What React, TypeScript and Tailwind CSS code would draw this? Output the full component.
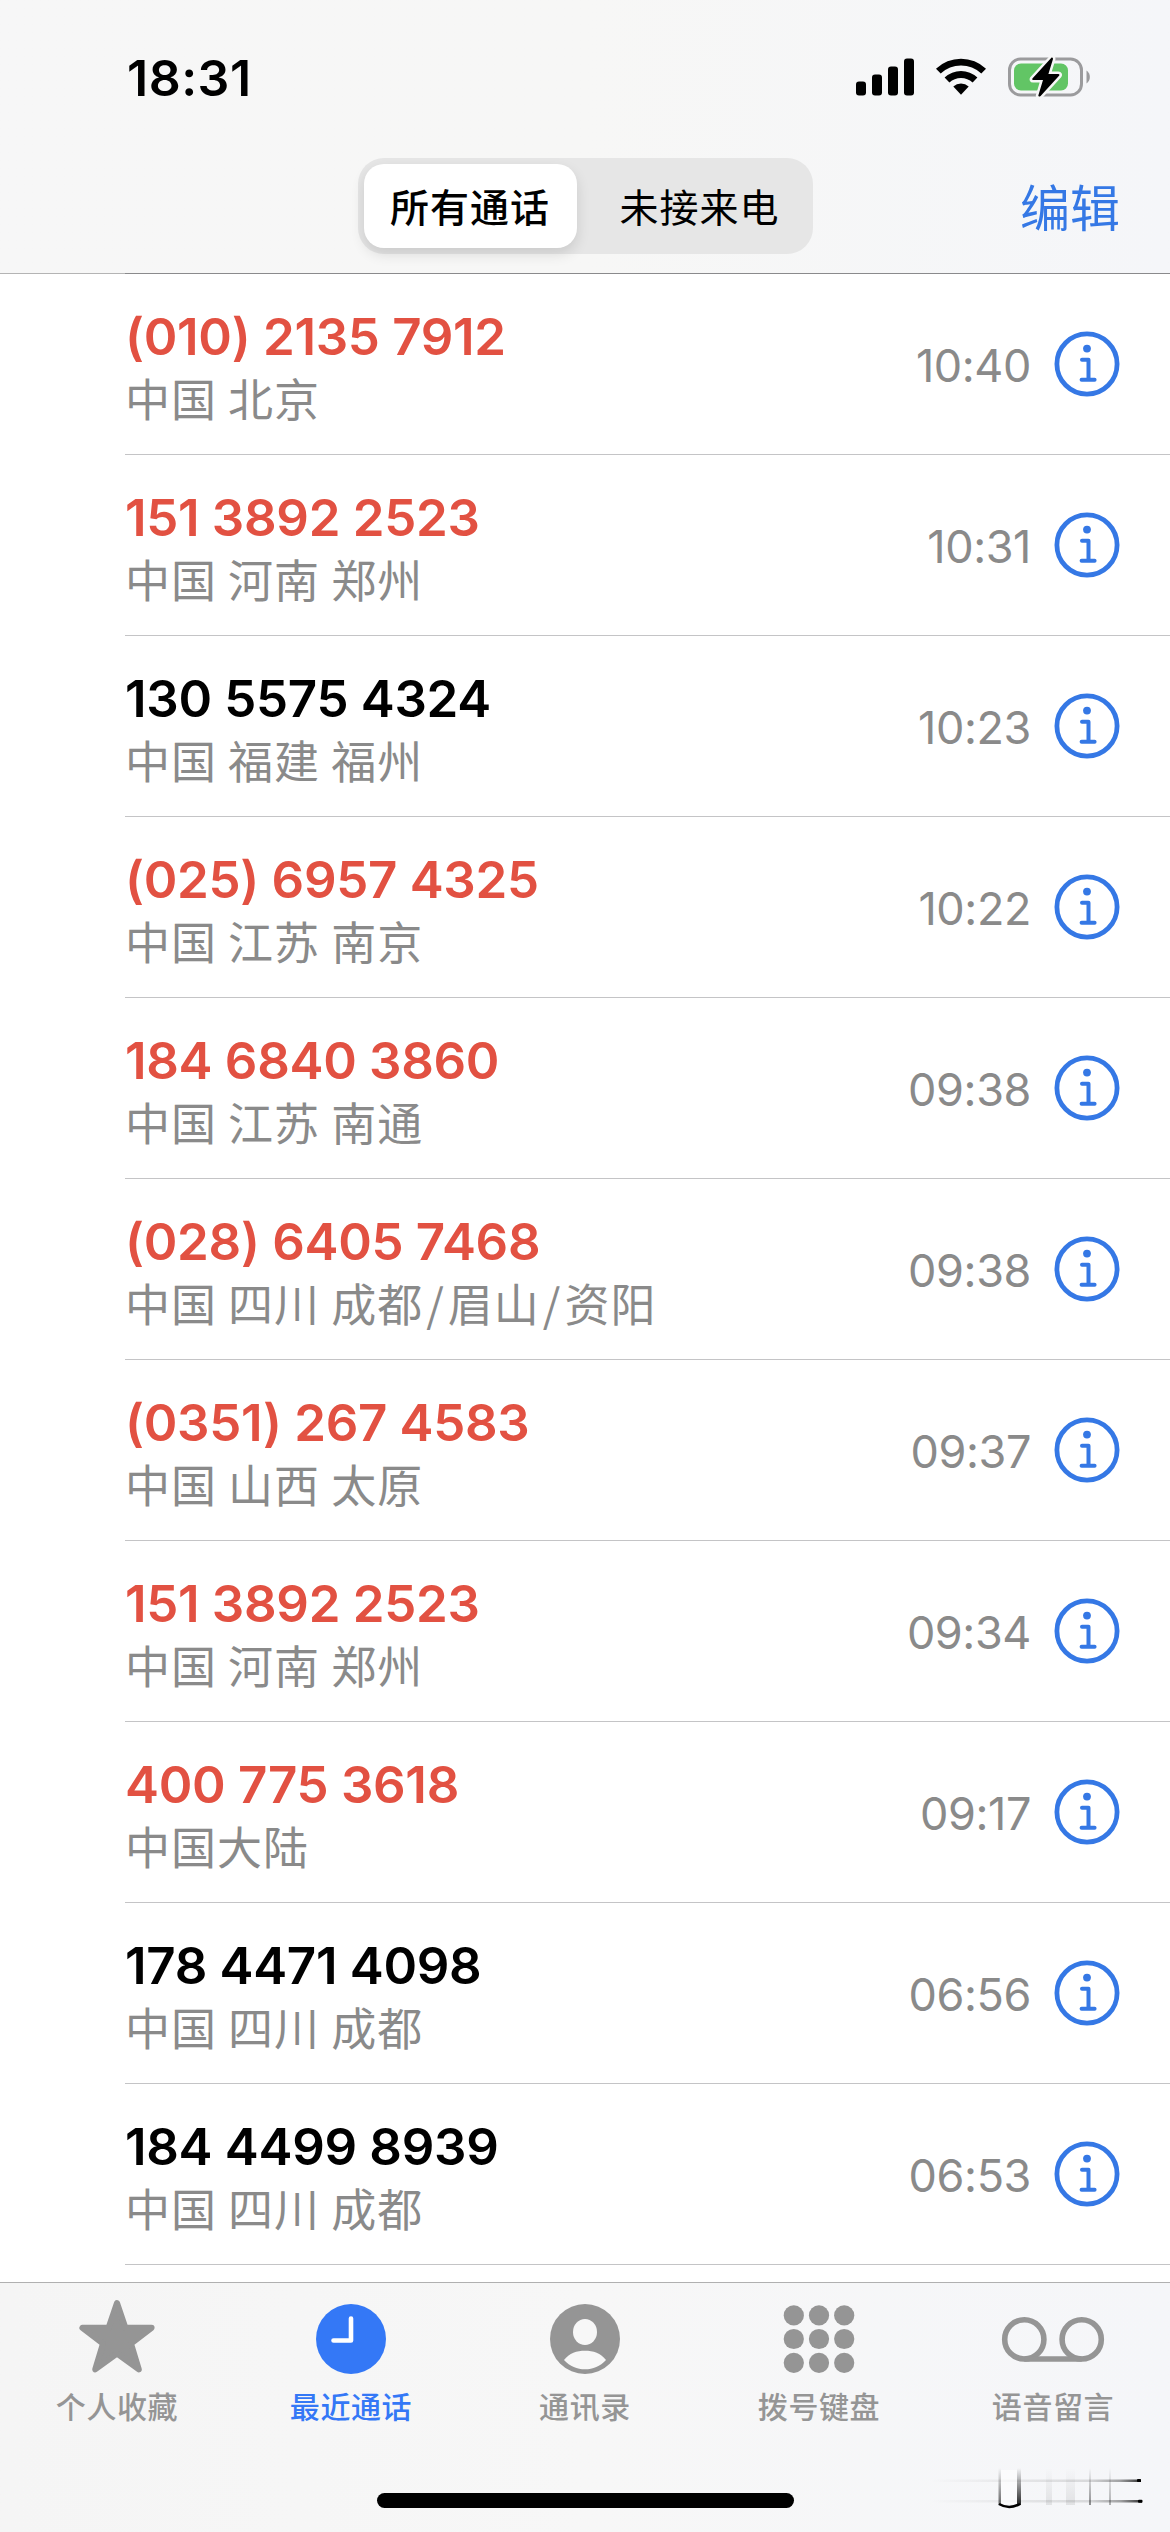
import clsx from "clsx";

interface Call {
  number: string;
  place: string;
  time: string;
  missed: boolean;
}

const calls: Call[] = [
  { number: "(010) 2135 7912", place: "中国 北京", time: "10:40", missed: true },
  { number: "151 3892 2523", place: "中国 河南 郑州", time: "10:31", missed: true },
  { number: "130 5575 4324", place: "中国 福建 福州", time: "10:23", missed: false },
  { number: "(025) 6957 4325", place: "中国 江苏 南京", time: "10:22", missed: true },
  { number: "184 6840 3860", place: "中国 江苏 南通", time: "09:38", missed: true },
  { number: "(028) 6405 7468", place: "中国 四川 成都/眉山/资阳", time: "09:38", missed: true },
  { number: "(0351) 267 4583", place: "中国 山西 太原", time: "09:37", missed: true },
  { number: "151 3892 2523", place: "中国 河南 郑州", time: "09:34", missed: true },
  { number: "400 775 3618", place: "中国大陆", time: "09:17", missed: true },
  { number: "178 4471 4098", place: "中国 四川 成都", time: "06:56", missed: false },
  { number: "184 4499 8939", place: "中国 四川 成都", time: "06:53", missed: false },
];

const StatusBar = () => (
  <div className="flex h-[158px] items-start justify-between pl-[127px] pr-[77px]">
    <span className="mt-[48px] text-[50px] leading-[60px] font-semibold tracking-[0.5px]">
      18:31
    </span>
    <div className="mt-[56px] flex items-start">
      {/* Signal */}
      <svg width="60" height="42" viewBox="0 0 60 42">
        <rect x="1" y="25.5" width="10" height="14" rx="3" />
        <rect x="17" y="18.5" width="10" height="21" rx="3" />
        <rect x="33" y="10.5" width="10" height="29" rx="3" />
        <rect x="49" y="2.5" width="10" height="37" rx="3" />
      </svg>
      {/* Wifi */}
      <svg className="ml-[20px]" width="52" height="42" viewBox="0 0 52 42">
        <path d="M1 12.8A36 36 0 0 1 51 12.8L46.3 17.6A29.3 29.3 0 0 0 5.7 17.6Z" />
        <path d="M9.6 21.6A24 24 0 0 1 42.4 21.6L37.6 26.4A17.2 17.2 0 0 0 14.4 26.4Z" />
        <path d="M18.3 30.4A11.4 11.4 0 0 1 33.7 30.4L26 38.8Z" />
      </svg>
      {/* Battery */}
      <svg className="ml-[20px]" width="86" height="42" viewBox="0 0 86 42">
        <rect x="2.5" y="3" width="72" height="36" rx="11" fill="none" stroke="#9b9b9d" strokeWidth="3" />
        <path d="M79.5 14.5A8 8 0 0 1 79.5 27.5Z" fill="#9b9b9d" />
        <rect x="7" y="7.5" width="54" height="27" rx="7" fill="#62c565" />
        <path
          d="M44.6 1.6L25.4 22.6Q24.6 24 26 24H36L31.3 39.6Q31.6 41.4 33.6 40L52.3 19.6Q53 18 51.4 18H41.4L46 3Q46 1 44.6 1.6Z"
          stroke="#f7f7f7"
          strokeWidth="5"
          strokeLinejoin="round"
          paintOrder="stroke"
        />
      </svg>
    </div>
  </div>
);

const Header = () => (
  <header className="flex h-[274px] flex-col bg-gradient-to-r from-[#f7f7f7] via-[#f7f7f6] to-[#f5f6f9]">
    <StatusBar />
    <div className="grid flex-1 grid-cols-[357.5px_455px_357.5px] items-start font-['Noto_Sans_CJK_SC',sans-serif]">
      <div />
      <div className="flex h-[96px] items-center rounded-[26px] bg-[#e6e6e6] p-1.5 text-[39px] leading-none tracking-[1px]">
        <button className="h-[84px] w-[213px] rounded-[20px] bg-white pb-0.5 font-medium shadow-[0_6px_14px_rgba(0,0,0,0.12)]">
          所有通话
        </button>
        <button className="h-[84px] flex-1 pb-0.5 pl-4">未接来电</button>
      </div>
      <button className="pt-[22px] pr-[50px] text-right text-[50px] leading-none text-[#3578e5]">
        编辑
      </button>
    </div>
    {/* The first list separator doubles up with the bar's hairline */}
    <div className="flex h-px">
      <div className="w-[125px] bg-[#b4b4b4]" />
      <div className="flex-1 bg-[#8a8a8c]" />
    </div>
  </header>
);

const InfoIcon = () => (
  <svg width="66" height="66" viewBox="0 0 66 66" fill="none" stroke="#3578e5" strokeWidth="4.8">
    <circle cx="33" cy="33" r="30.1" />
    <circle cx="33" cy="17.6" r="3.9" fill="#3578e5" stroke="none" />
    <path d="M28 28.8H34.5V48.6M27.6 48.8H40.6" strokeWidth="4" strokeLinecap="round" strokeLinejoin="round" />
  </svg>
);

const CallRow = ({ call }: { call: Call }) => (
  <li className="ml-[125px] flex h-[181px] items-center border-b border-[#c4c4c6] pr-[50px]">
    <div className="flex-1">
      <div
        className={clsx(
          "mt-1.5 text-[51px] leading-[62px] font-semibold tracking-[-0.3px]",
          call.missed ? "text-[#e25142]" : "text-black"
        )}
      >
        {call.number}
      </div>
      <div className="font-['Noto_Sans_CJK_SC',sans-serif] text-[45px] leading-[60px] font-normal tracking-[1px] text-[#8a8a8a]">
        {call.place.split("/").map((part, i) => (
          <span key={part}>
            {i > 0 && <span className="px-[3px]">/</span>}
            {part}
          </span>
        ))}
      </div>
    </div>
    <span className="mt-1 mr-[23px] text-[45px] tracking-[-0.4px] text-[#8a8a8a]">{call.time}</span>
    <InfoIcon />
  </li>
);

const StarIcon = () => (
  <svg width="80" height="80" viewBox="0 0 80 80" fill="currentColor" stroke="currentColor" strokeWidth="6" strokeLinejoin="round">
    <path d="M40 7L48.4 31.8H74.6L54 47.6L61.8 73.4L40 57.6L18.2 73.4L26 47.6L5.4 31.8H31.6Z" />
  </svg>
);

const ClockIcon = () => (
  <svg width="80" height="80" viewBox="0 0 80 80">
    <circle cx="40" cy="43" r="35" fill="currentColor" />
    <path d="M40 22.5V44.5H22.5" fill="none" stroke="#fff" strokeWidth="4.6" strokeLinecap="round" strokeLinejoin="round" />
  </svg>
);

const PersonIcon = () => (
  <svg width="80" height="80" viewBox="0 0 80 80" fill="#f7f7f7">
    <circle cx="40" cy="43" r="35" fill="currentColor" />
    <ellipse cx="40" cy="36" rx="12" ry="13" />
    <path d="M19 64C24 57 32 54.7 40 54.7S56 57 61 64C55 70.5 48 73.3 40 73.3S25 70.5 19 64Z" />
  </svg>
);

const KeypadIcon = () => (
  <svg width="80" height="80" viewBox="0 0 80 80" fill="currentColor">
    {[19.4, 43, 66.8].map((cy) =>
      [14.8, 40, 65.2].map((cx) => <circle key={`${cx}-${cy}`} cx={cx} cy={cy} r="10.1" />)
    )}
  </svg>
);

const VoicemailIcon = () => (
  <svg width="106" height="80" viewBox="0 0 106 80" fill="none" stroke="currentColor" strokeWidth="5.6">
    <circle cx="24.3" cy="43.4" r="19.6" />
    <circle cx="81.7" cy="43.4" r="19.6" />
    <path d="M24.3 63H81.7" />
  </svg>
);

const tabs = [
  { label: "个人收藏", icon: <StarIcon />, active: false },
  { label: "最近通话", icon: <ClockIcon />, active: true },
  { label: "通讯录", icon: <PersonIcon />, active: false },
  { label: "拨号键盘", icon: <KeypadIcon />, active: false },
  { label: "语音留言", icon: <VoicemailIcon />, active: false },
];

/* Faded strokes in the bottom right corner */
const CornerMark = () => (
  <svg className="absolute right-0 bottom-0" width="270" height="82" viewBox="0 0 270 82" fill="none">
    <defs>
      <linearGradient id="fadeX" x1="0" x2="1">
        <stop offset="0" stopColor="#000" stopOpacity="0" />
        <stop offset="0.75" stopColor="#000" stopOpacity="0.12" />
        <stop offset="0.9" stopColor="#000" stopOpacity="0.35" />
        <stop offset="0.98" stopColor="#000" stopOpacity="0.7" />
        <stop offset="1" stopColor="#000" />
      </linearGradient>
      <linearGradient id="fadeY" x1="0" x2="0" y1="0" y2="1">
        <stop offset="0" stopColor="#000" stopOpacity="0" />
        <stop offset="1" stopColor="#000" stopOpacity="0.85" />
      </linearGradient>
    </defs>
    <rect x="30" y="29.5" width="211" height="2.5" fill="url(#fadeX)" />
    <rect x="30" y="50" width="212" height="2.5" fill="url(#fadeX)" />
    <rect x="101" y="20" width="16" height="34" fill="#fff" opacity="0.6" />
    <rect x="98.5" y="18" width="2.5" height="37" fill="url(#fadeY)" opacity="0.7" />
    <rect x="117" y="18" width="4" height="37" fill="url(#fadeY)" />
    <path d="M99 54Q109 60 120 54" stroke="#000" strokeWidth="2.5" />
    <g fill="url(#fadeY)">
      <rect x="146" y="18" width="6" height="37" opacity="0.1" />
      <rect x="166" y="18" width="9" height="37" opacity="0.1" />
      <rect x="189" y="18" width="2" height="37" opacity="0.5" />
      <rect x="209" y="18" width="2" height="37" opacity="0.35" />
    </g>
    <rect x="237" y="29" width="4" height="3" rx="1" fill="#000" />
    <rect x="238" y="49.8" width="4.5" height="3" rx="1" fill="#000" />
  </svg>
);

const TabBar = () => (
  <nav className="relative flex h-[250px] flex-col items-center border-t border-[#b0b0b0] bg-gradient-to-r from-[#f5f5f5] via-[#f7f7f7] to-[#f5f6f9]">
    <div className="grid w-full grid-cols-5 pt-[13px]">
      {tabs.map((tab) => (
        <div
          key={tab.label}
          className={clsx(
            "flex flex-col items-center",
            tab.active ? "text-[#3478f6]" : "text-[#959595]"
          )}
        >
          {tab.icon}
          <span className="mt-[7px] font-['Noto_Sans_CJK_SC',sans-serif] text-[30px] leading-[44px] font-medium tracking-[0.6px]">
            {tab.label}
          </span>
        </div>
      ))}
    </div>
    <div className="mt-auto mb-6 h-[15px] w-[417px] rounded-full bg-black" />
    <CornerMark />
  </nav>
);

const App: React.FC = () => {
  return (
    <div className="flex h-[2532px] w-[1170px] flex-col overflow-hidden bg-white font-['Inter','Noto_Sans_CJK_SC',sans-serif] text-black">
      <Header />
      <ul className="flex-1 overflow-hidden">
        {calls.map((call) => (
          <CallRow key={call.number + call.time} call={call} />
        ))}
      </ul>
      <TabBar />
    </div>
  );
};

export default App;
